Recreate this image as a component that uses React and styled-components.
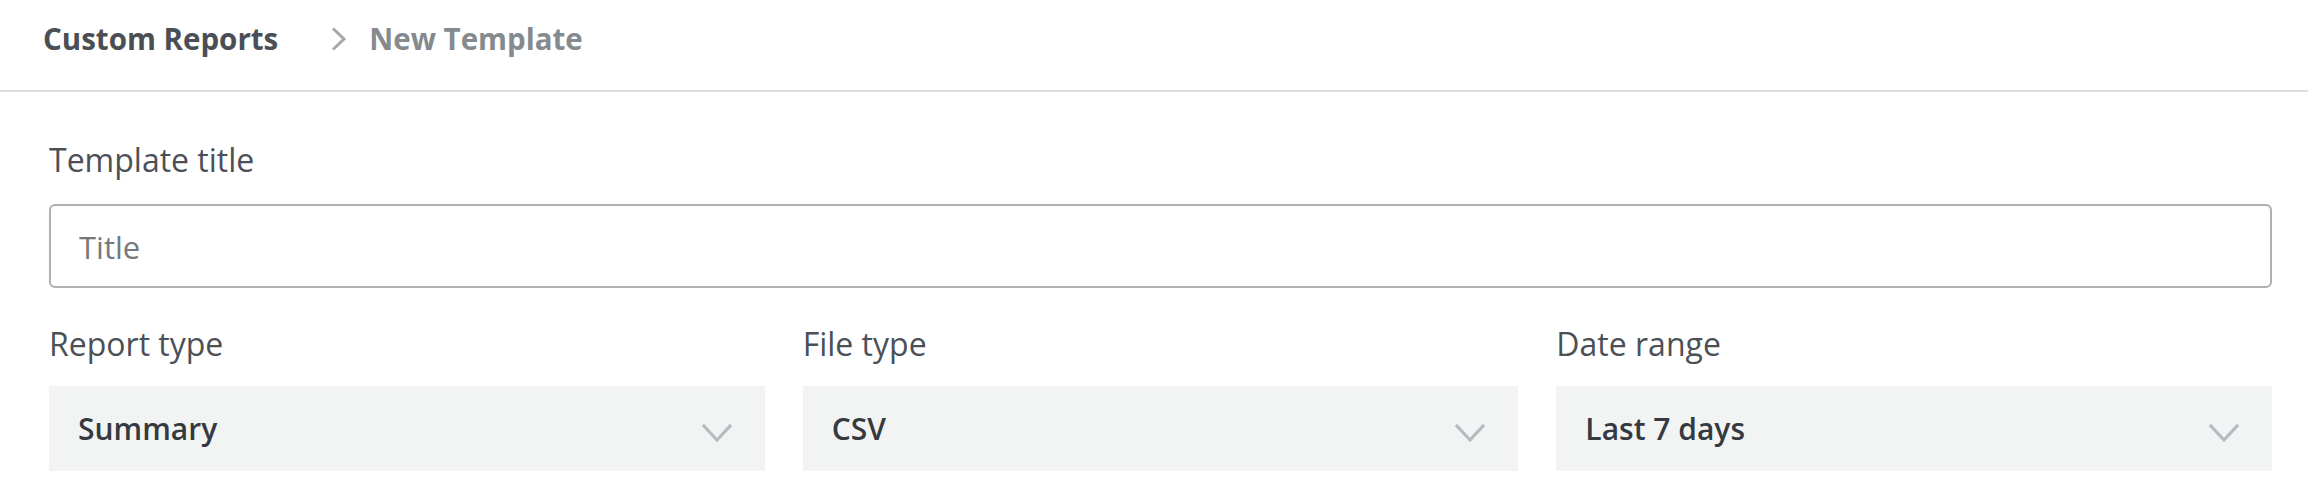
import React from "react";
import styled, { createGlobalStyle } from "styled-components";

const GlobalStyle = createGlobalStyle`
  html, body {
    margin: 0;
    padding: 0;
    background: #ffffff;
  }
  body {
    font-family: "Open Sans", "Noto Sans", Arial, sans-serif;
    -webkit-font-smoothing: antialiased;
  }
  * { box-sizing: border-box; }
`;

const Page = styled.div`
  width: 100%;
  background: #ffffff;
`;

const Breadcrumbs = styled.nav`
  display: flex;
  align-items: flex-start;
  height: 92px;
  padding: 19px 0 0 43px;
  border-bottom: 2px solid #dcdddd;
`;

const Crumb = styled.span`
  font-size: 29.5px;
  line-height: 40px;
  font-weight: 700;
  color: ${(p) => (p.$current ? "#858a8f" : "#4a4f56")};
  white-space: nowrap;
`;

const CrumbSep = styled.svg`
  width: 16px;
  height: 24px;
  margin: 8px 22px 0 53px;
  flex: none;
`;

const Form = styled.div`
  display: flex;
  flex-direction: column;
  padding: 48px 36px 0 49px;
`;

const Field = styled.div`
  display: flex;
  flex-direction: column;
`;

const Label = styled.label`
  font-size: 32px;
  line-height: 40px;
  font-weight: 400;
  color: #4b5057;
  margin-bottom: ${(p) => (p.$tight ? "22px" : "24px")};
`;

const TextInput = styled.input`
  width: 100%;
  height: 84px;
  border: 2px solid #adb1b5;
  border-radius: 6px;
  padding: 2px 28px 0;
  font-family: inherit;
  font-size: 31px;
  color: #353a40;
  background: #ffffff;
  outline: none;
  &::placeholder {
    color: #76797c;
    opacity: 1;
  }
`;

const SelectRow = styled.div`
  display: grid;
  grid-template-columns: repeat(3, 1fr);
  column-gap: 38px;
  margin-top: 36px;
`;

const SelectBox = styled.div`
  display: flex;
  align-items: center;
  justify-content: space-between;
  height: 85px;
  padding: 0 33px 0 29px;
  background: #f2f4f4;
  cursor: pointer;
`;

const SelectValue = styled.span`
  font-size: 30px;
  line-height: 40px;
  font-weight: 600;
  color: #353a40;
`;

const Chevron = styled.svg`
  width: 30px;
  height: 19px;
  margin-top: 9px;
  flex: none;
`;

function ChevronDown() {
  return (
    <Chevron viewBox="0 0 30 19" fill="none">
      <polyline
        points="2,2 15,16 28,2"
        stroke="#b5bcc1"
        strokeWidth="3.2"
        strokeLinecap="square"
        strokeLinejoin="miter"
      />
    </Chevron>
  );
}

function Select({ label, value }) {
  return (
    <Field>
      <Label $tight>{label}</Label>
      <SelectBox role="button">
        <SelectValue>{value}</SelectValue>
        <ChevronDown />
      </SelectBox>
    </Field>
  );
}

export default function App() {
  return (
    <Page>
      <GlobalStyle />
      <Breadcrumbs>
        <Crumb>Custom Reports</Crumb>
        <CrumbSep viewBox="0 0 16 24" fill="none">
          <polyline
            points="2,1.5 13,12 2,22.5"
            stroke="#a5a9ad"
            strokeWidth="3"
            fill="none"
          />
        </CrumbSep>
        <Crumb $current>New Template</Crumb>
      </Breadcrumbs>
      <Form>
        <Field>
          <Label htmlFor="template-title">Template title</Label>
          <TextInput id="template-title" placeholder="Title" />
        </Field>
        <SelectRow>
          <Select label="Report type" value="Summary" />
          <Select label="File type" value="CSV" />
          <Select label="Date range" value="Last 7 days" />
        </SelectRow>
      </Form>
    </Page>
  );
}
